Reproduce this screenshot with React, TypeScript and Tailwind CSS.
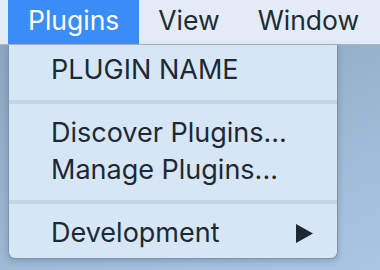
import React from 'react';

const menuBar = ['Plugins', 'View', 'Window'];

export default function App() {
  return (
    <div
      className="w-[380px] h-[270px] overflow-hidden bg-[linear-gradient(160deg,#8aa2ba_0%,#97b2cd_45%,#a9c6e3_100%)] text-[#1d2934]"
      style={{ fontFamily: 'Inter, "Noto Sans", sans-serif' }}
    >
      {/* Menu bar */}
      <div className="flex h-[44px] bg-[#e3ecf6] pl-[8px] border-b border-[#a9b7c5] box-content">
        {menuBar.map((label, i) => (
          <div
            key={label}
            className={`flex items-center pb-[3px] text-[26.5px] leading-none ${
              i === 0 ? 'bg-[#3a8cf7] text-white px-[20px]' : 'text-[#222b33] px-[19px]'
            }`}
          >
            {label}
          </div>
        ))}
      </div>

      {/* Dropdown */}
      <div className="ml-[8px] w-[330px] h-[214px] rounded-b-[7px] bg-[#d6e6f5] border-x border-b border-[#7f93a8] shadow-[0_2px_6px_rgba(40,60,90,0.25)] pt-[6px] text-[27px] leading-[37px]">
        <div className="pl-[42px]">PLUGIN NAME</div>
        <div className="mt-[12px] mb-[10px] h-[4px] bg-[#c4d4e3]" />
        <div className="pl-[42px]">Discover Plugins...</div>
        <div className="pl-[42px]">Manage Plugins...</div>
        <div className="mt-[12px] mb-[10px] h-[4px] bg-[#c4d4e3]" />
        <div className="flex items-center justify-between pl-[42px] pr-[24px]">
          <span>Development</span>
          <svg width="17" height="19" viewBox="0 0 17 19" className="mt-[1px]">
            <path d="M0 0 L17 9.5 L0 19 Z" fill="#1d2934" />
          </svg>
        </div>
      </div>
    </div>
  );
}
